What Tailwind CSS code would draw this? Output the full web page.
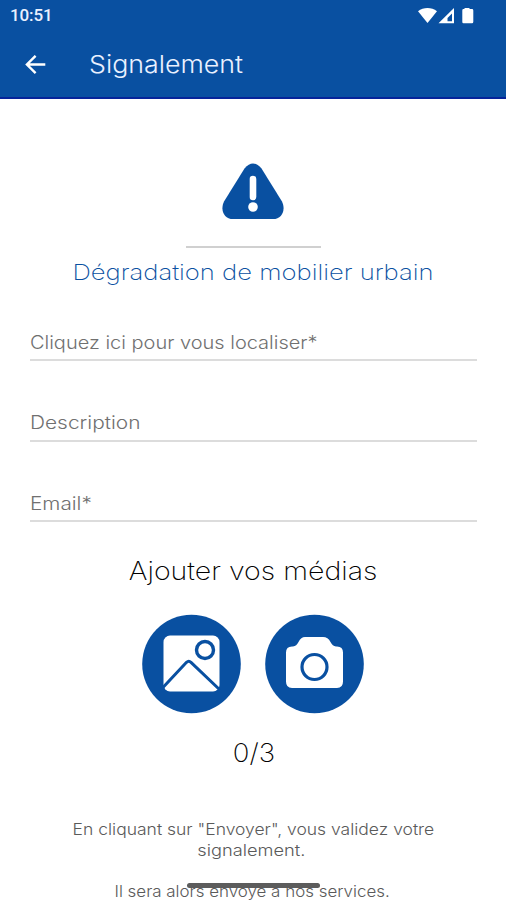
<!DOCTYPE html>
<html lang="fr">
<head>
<meta charset="utf-8">
<title>Signalement</title>
<script src="https://cdn.jsdelivr.net/npm/@tailwindcss/browser@4"></script>
</head>
<body class="bg-white">
<div class="relative flex h-[900px] w-[506px] flex-col overflow-hidden bg-white font-['Inter','Open_Sans',sans-serif] font-light">
  <header class="h-[99px] shrink-0 border-b-2 border-[#06249a] bg-[#0950a1] text-[#eaf1ff]">
    <div class="flex h-8 items-center justify-between pl-[10px] pr-[31px]">
      <span class="font-['Roboto',sans-serif] text-[17px] font-medium tracking-[-0.1px]">10:51</span>
      <svg class="h-4 w-[57px]" viewBox="0 0 57 16" fill="#fff">
        <path d="M0 3.300C5.500 -1 13.500 -1 19 3.300L9.500 15Z"/>
        <path fill-rule="evenodd" d="M20.500 15.200L36 0V15.200ZM29.500 13.200H34V5.500L29.500 10Z"/>
        <path d="M46.500 1V0H51.500V1H54Q55.300 1 55.300 2.400V13.800Q55.300 15.300 54 15.300H45.400Q44.300 15.300 44.300 13.800V2.400Q44.300 1 45.400 1Z"/>
      </svg>
    </div>
    <div class="flex h-[65px] items-center pl-[25px]">
      <svg class="h-5 w-[21px]" viewBox="0 0 21 20" fill="none" stroke="#fff" stroke-width="2.4"><path d="M20.300 9.500H2M10.600 0.800L1.900 9.500L10.600 18.200"/></svg>
      <h1 class="ml-[43px] origin-left scale-x-[1.115] text-[24px] font-light leading-8 whitespace-nowrap">Signalement</h1>
    </div>
  </header>
  <main class="flex flex-col pr-[29px] pl-[30px]">
    <svg class="mt-[64px] mr-px h-[58px] w-[62px] self-center" viewBox="0 0 62 58"><path d="M22.500 5.500Q31 -4.500 39.500 5.500L60 38.500C64 47 60 56 51 56H11C2 56 -2 47 2 38.500Z" fill="#0950a1"/><path d="M31 16V34" stroke="#fff" stroke-width="6.600" stroke-linecap="round"/><circle cx="31" cy="44" r="4.800" fill="#fff"/></svg>
    <div class="mt-[25px] h-[2px] w-[135px] self-center bg-[#d0d0d0]"></div>
    <h2 class="mt-[8px] text-center text-[22px] font-extralight leading-8 whitespace-nowrap text-[#0950a1]"><span class="inline-block scale-x-[1.165]">Dégradation de mobilier urbain</span></h2>
    <div class="mt-[39px] flex h-[34px] items-start border-b-2 border-[#dcdcdc] text-[18px] leading-[31px] text-[#707070]"><span class="origin-left scale-x-[1.11]">Cliquez ici pour vous localiser*</span></div>
    <div class="mt-[46px] flex h-[35px] items-start border-b-2 border-[#dcdcdc] text-[18px] leading-[31px] text-[#707070]"><span class="origin-left scale-x-[1.16]">Description</span></div>
    <div class="mt-[46px] flex h-[34px] items-start border-b-2 border-[#dcdcdc] text-[18px] leading-[31px] text-[#707070]"><span class="origin-left scale-x-[1.15]">Email*</span></div>
    <h3 class="mt-[29px] text-center text-[25px] font-extralight leading-10 whitespace-nowrap text-black"><span class="inline-block scale-x-[1.14]">Ajouter vos médias</span></h3>
    <div class="mt-[23px] mr-px flex justify-center gap-6">
      <svg class="h-[100px] w-[99px]" viewBox="0 0 99 100"><ellipse cx="49.500" cy="50" rx="49.300" ry="49.300" fill="#0950a1"/><rect x="21.500" y="21.500" width="56" height="56" rx="6.500" fill="#fff"/><g fill="none" stroke="#0950a1"><path d="M20 74.500L44.500 48.300Q46.800 46.200 49 48.300L78 76" stroke-width="3"/><circle cx="63" cy="36" r="8.500" stroke-width="3.400"/></g></svg>
      <svg class="h-[100px] w-[99px]" viewBox="0 0 99 100"><ellipse cx="49.500" cy="50" rx="49.300" ry="49.300" fill="#0950a1"/><path d="M27 32.500H28Q31.500 32 33.500 28Q36 23 40 23H58Q63 23 65.500 28Q67.500 32 71 32.500H72Q78 32.500 78 38.500V67.500Q78 74 72 74H27Q21 74 21 67.500V38.500Q21 32.500 27 32.500Z" fill="#fff"/><circle cx="49.500" cy="53" r="12.500" fill="none" stroke="#0950a1" stroke-width="3.200"/></svg>
    </div>
    <p class="mt-[19px] text-center text-[26px] font-extralight leading-10 text-black"><span class="inline-block scale-x-[1.06]">0/3</span></p>
    <p class="mt-[46px] text-center text-[16px] leading-[21px] whitespace-nowrap text-[#5a5a5a]"><span class="inline-block scale-x-[1.093]">En cliquant sur "Envoyer", vous validez votre</span><br><span class="mr-1 inline-block scale-x-[1.14]">signalement.</span></p>
    <p class="mt-[20px] mr-[3px] text-center text-[16px] leading-[21px] whitespace-nowrap text-[#5a5a5a]"><span class="inline-block scale-x-[1.058]">Il sera alors envoyé à nos services.</span></p>
  </main>
  <div class="absolute left-[187px] top-[883px] h-[5px] w-[133px] rounded-full bg-[#5c5c5c]"></div>
</div>
</body>
</html>
